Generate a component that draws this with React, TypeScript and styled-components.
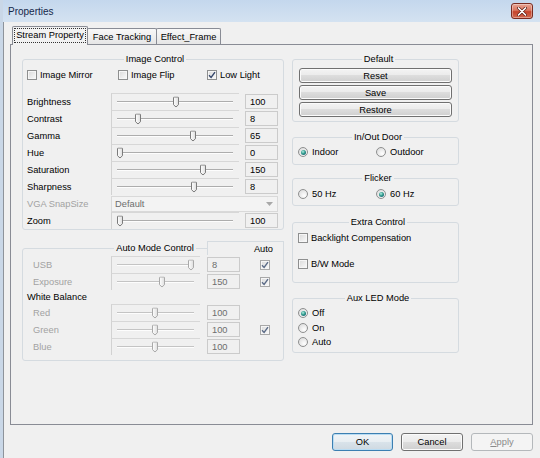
import React from 'react';
import styled, { createGlobalStyle, css } from 'styled-components';

const GlobalStyle = createGlobalStyle`
  html, body { margin: 0; padding: 0; }
  body {
    background: #f0f0f0;
    font-family: "Liberation Sans", Arial, sans-serif;
    font-size: 9.3px;
    color: #000;
  }
  *, *::before, *::after { box-sizing: border-box; }
`;

const ScWindow = styled.div`
  width: 540px;
  height: 458px;
  display: flex;
  flex-direction: column;
  background: #f0f0f0;
  border-left: 3px solid #c9d7e7;
  overflow: hidden;
`;

const ScTitleBar = styled.div`
  flex: none;
  height: 22px;
  display: flex;
  align-items: center;
  justify-content: space-between;
  padding: 0 7px 0 5px;
  background: linear-gradient(#c4d7ed, #d4e2f1);
`;

const ScTitle = styled.span`
  font-size: 10px;
  color: #15284a;
`;

const ScClose = styled.div`
  width: 22px;
  height: 16px;
  border: 1px solid #7a2c21;
  border-radius: 3px;
  display: flex;
  align-items: center;
  justify-content: center;
  background: linear-gradient(#e8a595 0%, #d9765f 45%, #c5442c 55%, #d26a50 100%);
  box-shadow: inset 0 0 0 1px rgba(255, 255, 255, 0.35);
`;

const ScBody = styled.div`
  flex: 1;
  display: flex;
  flex-direction: column;
  padding: 4px 7px 0 6px;
  border-left: 1px solid #8d939b;
`;

const ScTabs = styled.div`
  display: flex;
  align-items: flex-end;
  height: 18px;
  padding-left: 2px;
  position: relative;
  z-index: 1;
`;

const ScTab = styled.div<{ $active?: boolean; $w: number }>`
  width: ${p => p.$w}px;
  height: ${p => (p.$active ? 19 : 16)}px;
  margin-bottom: ${p => (p.$active ? -1 : 0)}px;
  margin-right: -1px;
  display: flex;
  align-items: center;
  justify-content: center;
  border: 1px solid #898c95;
  border-bottom: none;
  border-radius: 2px 2px 0 0;
  background: ${p => (p.$active ? '#f2f2f2' : 'linear-gradient(#f8f8f8, #e6e6e6)')};
  ${p => p.$active && css`padding-bottom: 2px;`}
`;

const ScFocus = styled.span`
  outline: 1px dotted #333;
  padding: 0 1px;
  line-height: 13px;
`;

const ScPanel = styled.div`
  height: 381px;
  border: 1px solid #898c95;
  display: flex;
  gap: 8px;
  padding: 8px 0 0 11px;
`;

const ScColumn = styled.div<{ $w: number }>`
  width: ${p => p.$w}px;
  display: flex;
  flex-direction: column;
`;

const ScGroup = styled.fieldset<{ $h: number; $mt?: number; $pl?: number }>`
  margin: ${p => p.$mt ?? 0}px 0 0 0;
  padding: 0 0 0 ${p => p.$pl ?? 4}px;
  min-width: 0;
  height: ${p => p.$h}px;
  border: 1px solid #d5dbe0;
  border-radius: 3px;
  position: relative;
`;

const ScLegend = styled.legend`
  margin: 0 auto;
  padding: 0 2px;
  line-height: 12px;
`;

const ScCheckRow = styled.div`
  display: grid;
  grid-template-columns: 91px 89px auto;
  height: 13px;
  margin-top: 3px;
  align-items: center;
`;

const ScItem = styled.label`
  display: flex;
  align-items: center;
  gap: 3px;
  white-space: nowrap;
`;

const ScBox = styled.span<{ $disabled?: boolean }>`
  width: 10px;
  height: 10px;
  flex: none;
  display: flex;
  align-items: center;
  justify-content: center;
  border: 1px solid ${p => (p.$disabled ? '#a8a8a8' : '#8e8f8f')};
  background: linear-gradient(135deg, #d9d9d9, #fbfbfb);
  box-shadow: inset 0 0 0 1px #f6f6f6;
`;

const ScRadio = styled.span<{ $on?: boolean }>`
  width: 10px;
  height: 10px;
  flex: none;
  border-radius: 50%;
  border: 1px solid #8e8f8f;
  background: radial-gradient(circle at 65% 70%, #ffffff, #d6d6d6);
  position: relative;
  ${p => p.$on && css`
    &::after {
      content: '';
      position: absolute;
      inset: 1.5px;
      border-radius: 50%;
      background: radial-gradient(circle at 40% 35%, #b6f0e4, #2f9a8c 45%, #17566b 90%);
    }
  `}
`;

const ScGrid = styled.div<{ $cols: string; $rows: string; $mt: number; $gap: number }>`
  display: grid;
  grid-template-columns: ${p => p.$cols};
  grid-template-rows: ${p => p.$rows};
  column-gap: ${p => p.$gap}px;
  margin-top: ${p => p.$mt}px;
`;

const ScLabel = styled.div<{ $dim?: boolean; $indent?: number; $span?: number }>`
  display: flex;
  align-items: center;
  white-space: nowrap;
  color: ${p => (p.$dim ? '#a2a2a2' : '#000')};
  padding-left: ${p => p.$indent ?? 0}px;
  ${p => p.$span && css`grid-column: span ${p.$span};`}
`;

const ScSliderBox = styled.div`
  border-top: 1px solid #d7d7d7;
  border-left: 1px solid #d2d2d2;
  display: flex;
  align-items: center;
  padding: 0 6px 0 5px;
`;

const ScTrack = styled.div<{ $disabled?: boolean }>`
  flex: 1;
  height: 2px;
  position: relative;
  border-top: 1px solid ${p => (p.$disabled ? '#c4c4c4' : '#adadad')};
  border-bottom: 1px solid #fdfdfd;
`;

const ScThumb = styled.svg`
  position: absolute;
  top: 50%;
  transform: translateY(-50%);
  display: block;
`;

const ScValue = styled.div<{ $dim?: boolean }>`
  align-self: center;
  height: 15px;
  border: 1px solid #cbcbcb;
  background: #f0f0f0;
  padding-left: 4px;
  display: flex;
  align-items: center;
  color: ${p => (p.$dim ? '#6d6d6d' : '#000')};
`;

const ScCombo = styled.div`
  grid-column: span 2;
  align-self: center;
  height: 16px;
  border: 1px solid #d9d9d9;
  background: #f3f3f3;
  color: #6d6d6d;
  padding: 0 4px 0 3px;
  display: flex;
  align-items: center;
  justify-content: space-between;
`;

const ScCell = styled.div`
  display: flex;
  align-items: center;
  justify-content: center;
`;

/* the "Auto" caption frame sits over the group's top-right corner */
const ScAutoHead = styled.div`
  position: absolute;
  top: -13px;
  right: -1px;
  width: 77px;
  height: 14px;
  border-top: 1px solid #d5dbe0;
  border-left: 1px solid #d5dbe0;
  border-right: 1px solid #d5dbe0;
  background: #f0f0f0;
  display: flex;
  align-items: center;
  justify-content: flex-end;
  padding: 1px 10px 0 0;
`;

const ScStack = styled.div<{ $mt: number; $gap: number; $ml?: number }>`
  display: flex;
  flex-direction: column;
  gap: ${p => p.$gap}px;
  margin-top: ${p => p.$mt}px;
  margin-left: ${p => p.$ml ?? 0}px;
`;

const ScRadioRow = styled.div<{ $mt: number }>`
  display: grid;
  grid-template-columns: 78px auto;
  height: 12px;
  align-items: center;
  margin-top: ${p => p.$mt}px;
`;

const ScOption = styled.div<{ $h?: number }>`
  height: ${p => p.$h ?? 12}px;
  display: flex;
  align-items: center;
  gap: 4px;
  white-space: nowrap;
`;

const ScPush = styled.button<{ $w: number; $h: number; $kind?: 'focus' | 'disabled' }>`
  width: ${p => p.$w}px;
  height: ${p => p.$h}px;
  margin: 0;
  padding: 0;
  font-family: inherit;
  font-size: 9.3px;
  color: #000;
  border: 1px solid #707070;
  border-radius: 3px;
  background: linear-gradient(#f3f3f3 0%, #ebebeb 49%, #dddddd 50%, #cfcfcf 100%);
  box-shadow: inset 0 0 0 1px #fbfbfb;
  ${p => p.$kind === 'focus' && css`
    border-color: #3c7fb1;
    box-shadow: inset 0 0 0 1px #b9dcf3;
    background: linear-gradient(#f0f4f7 0%, #e8eef2 49%, #d9e3ea 50%, #cfd9e1 100%);
  `}
  ${p => p.$kind === 'disabled' && css`
    border-color: #b4b8bb;
    background: #f4f4f4;
    box-shadow: none;
    color: #8a8a8a;
  `}
`;

const ScFooter = styled.div`
  display: flex;
  justify-content: flex-end;
  gap: 8px;
  margin-top: 8px;
`;

function Check({ on, disabled }: { on?: boolean; disabled?: boolean }) {
  return (
    <ScBox $disabled={disabled}>
      {on && (
        <svg width="8" height="8" viewBox="0 0 8 8">
          <path d="M1 4.3 L3.1 6.4 L7 1.2" fill="none" stroke={disabled ? '#5a6a86' : '#34466a'} strokeWidth="1.4" />
        </svg>
      )}
    </ScBox>
  );
}

function Slider({ pos, disabled }: { pos: number; disabled?: boolean }) {
  const stroke = disabled ? '#a9a9a9' : '#7b7b7b';
  return (
    <ScSliderBox>
      <ScTrack $disabled={disabled}>
        <ScThumb width="6" height="11" viewBox="0 0 6 11" style={{ left: `calc(${pos} * (100% - 6px))` }}>
          <defs>
            <linearGradient id="th" x1="0" y1="0" x2="1" y2="0">
              <stop offset="0" stopColor="#ffffff" />
              <stop offset="1" stopColor="#dedede" />
            </linearGradient>
          </defs>
          <path d="M0.5 1 Q0.5 0.5 1 0.5 H5 Q5.5 0.5 5.5 1 V8.2 L3 10.5 L0.5 8.2 Z" fill="url(#th)" stroke={stroke} strokeWidth="1" />
        </ScThumb>
      </ScTrack>
    </ScSliderBox>
  );
}

const imageRows = [
  { name: 'Brightness', pos: 0.51, value: '100' },
  { name: 'Contrast', pos: 0.16, value: '8' },
  { name: 'Gamma', pos: 0.66, value: '65' },
  { name: 'Hue', pos: 0, value: '0' },
  { name: 'Saturation', pos: 0.75, value: '150' },
  { name: 'Sharpness', pos: 0.67, value: '8' },
];

export default function App(): JSX.Element {
  return (
    <>
      <GlobalStyle />
      <ScWindow>
        <ScTitleBar>
          <ScTitle>Properties</ScTitle>
          <ScClose>
            <svg width="10" height="9" viewBox="0 0 10 9">
              <path d="M1.5 1 L8.5 8 M8.5 1 L1.5 8" stroke="#5a1a10" strokeWidth="3" strokeLinecap="round" />
              <path d="M1.5 1 L8.5 8 M8.5 1 L1.5 8" stroke="#ffffff" strokeWidth="1.7" strokeLinecap="round" />
            </svg>
          </ScClose>
        </ScTitleBar>
        <ScBody>
          <ScTabs>
            <ScTab $active $w={76}><ScFocus>Stream Property</ScFocus></ScTab>
            <ScTab $w={70}>Face Tracking</ScTab>
            <ScTab $w={65}>Effect_Frame</ScTab>
          </ScTabs>
          <ScPanel>
            <ScColumn $w={262}>
              <ScGroup $h={177}>
                <ScLegend>Image Control</ScLegend>
                <ScCheckRow>
                  <ScItem><Check />Image Mirror</ScItem>
                  <ScItem><Check />Image Flip</ScItem>
                  <ScItem><Check on />Low Light</ScItem>
                </ScCheckRow>
                <ScGrid $cols="78px 128px 33px" $rows="repeat(8, 17px)" $mt={12} $gap={6}>
                  {imageRows.map(r => (
                    <React.Fragment key={r.name}>
                      <ScLabel>{r.name}</ScLabel>
                      <Slider pos={r.pos} />
                      <ScValue>{r.value}</ScValue>
                    </React.Fragment>
                  ))}
                  <ScLabel $dim>VGA SnapSize</ScLabel>
                  <ScCombo>
                    <span>Default</span>
                    <svg width="7" height="4" viewBox="0 0 7 4"><path d="M0 0 H7 L3.5 4 Z" fill="#a8a8a8" /></svg>
                  </ScCombo>
                  <ScLabel>Zoom</ScLabel>
                  <Slider pos={0} />
                  <ScValue>100</ScValue>
                </ScGrid>
              </ScGroup>

              <ScGroup $h={119} $mt={12}>
                <ScLegend>Auto Mode Control</ScLegend>
                <ScAutoHead>Auto</ScAutoHead>
                <ScGrid $cols="77px 89px 33px 1fr" $rows="17px 17px 14px 17px 17px 17px" $mt={2} $gap={7}>
                  <ScLabel $dim $indent={6}>USB</ScLabel>
                  <Slider pos={1} disabled />
                  <ScValue $dim>8</ScValue>
                  <ScCell><Check on disabled /></ScCell>

                  <ScLabel $dim $indent={6}>Exposure</ScLabel>
                  <Slider pos={0.59} disabled />
                  <ScValue $dim>150</ScValue>
                  <ScCell><Check on disabled /></ScCell>

                  <ScLabel $span={4}>White Balance</ScLabel>

                  <ScLabel $dim $indent={6}>Red</ScLabel>
                  <Slider pos={0.49} disabled />
                  <ScValue $dim>100</ScValue>
                  <ScCell />

                  <ScLabel $dim $indent={6}>Green</ScLabel>
                  <Slider pos={0.49} disabled />
                  <ScValue $dim>100</ScValue>
                  <ScCell><Check on disabled /></ScCell>

                  <ScLabel $dim $indent={6}>Blue</ScLabel>
                  <Slider pos={0.49} disabled />
                  <ScValue $dim>100</ScValue>
                  <ScCell />
                </ScGrid>
              </ScGroup>
            </ScColumn>

            <ScColumn $w={167}>
              <ScGroup $h={69} $pl={6}>
                <ScLegend>Default</ScLegend>
                <ScStack $mt={3} $gap={2}>
                  <ScPush $w={153} $h={15}>Reset</ScPush>
                  <ScPush $w={153} $h={15}>Save</ScPush>
                  <ScPush $w={153} $h={15}>Restore</ScPush>
                </ScStack>
              </ScGroup>

              <ScGroup $h={34} $mt={9} $pl={5}>
                <ScLegend>In/Out Door</ScLegend>
                <ScRadioRow $mt={3}>
                  <ScOption><ScRadio $on />Indoor</ScOption>
                  <ScOption><ScRadio />Outdoor</ScOption>
                </ScRadioRow>
              </ScGroup>

              <ScGroup $h={34} $mt={7} $pl={5}>
                <ScLegend>Flicker</ScLegend>
                <ScRadioRow $mt={4}>
                  <ScOption><ScRadio />50 Hz</ScOption>
                  <ScOption><ScRadio $on />60 Hz</ScOption>
                </ScRadioRow>
              </ScGroup>

              <ScGroup $h={67} $mt={10} $pl={5}>
                <ScLegend>Extra Control</ScLegend>
                <ScStack $mt={5} $gap={16}>
                  <ScItem><Check />Backlight Compensation</ScItem>
                  <ScItem><Check />B/W Mode</ScItem>
                </ScStack>
              </ScGroup>

              <ScGroup $h={61} $mt={9} $pl={5}>
                <ScLegend>Aux LED Mode</ScLegend>
                <ScStack $mt={2} $gap={0}>
                  <ScOption $h={14.5}><ScRadio $on />Off</ScOption>
                  <ScOption $h={14.5}><ScRadio />On</ScOption>
                  <ScOption $h={14.5}><ScRadio />Auto</ScOption>
                </ScStack>
              </ScGroup>
            </ScColumn>
          </ScPanel>
          <ScFooter>
            <ScPush $w={61} $h={18} $kind="focus">OK</ScPush>
            <ScPush $w={62} $h={18}>Cancel</ScPush>
            <ScPush $w={62} $h={18} $kind="disabled"><u>A</u>pply</ScPush>
          </ScFooter>
        </ScBody>
      </ScWindow>
    </>
  );
}
